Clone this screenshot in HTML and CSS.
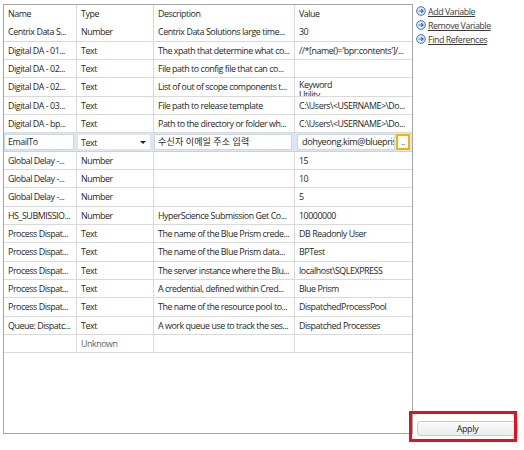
FILE: index.html
```html
<!DOCTYPE html>
<html lang="en">
<head>
  <meta charset="UTF-8" />
  <title>Environment Variables</title>
  <link rel="stylesheet" href="styles.css">
</head>
<body>

  <div class="grid">
    <div class="row head">
      <div class="cell">Name</div>
      <div class="cell">Type</div>
      <div class="cell">Description</div>
      <div class="cell">Value</div>
    </div>
    <div class="row">
      <div class="cell">Centrix Data S...</div>
      <div class="cell">Number</div>
      <div class="cell">Centrix Data Solutions large time...</div>
      <div class="cell">30</div>
    </div>
    <div class="row">
      <div class="cell">Digital DA - 01...</div>
      <div class="cell">Text</div>
      <div class="cell">The xpath that determine what co...</div>
      <div class="cell">//*[name()='bpr:contents']/...</div>
    </div>
    <div class="row">
      <div class="cell">Digital DA - 02...</div>
      <div class="cell">Text</div>
      <div class="cell">File path to config file that can co...</div>
      <div class="cell"></div>
    </div>
    <div class="row">
      <div class="cell">Digital DA - 02...</div>
      <div class="cell">Text</div>
      <div class="cell">List of out of scope components t...</div>
      <div class="cell multi">Keyword<br>Utility</div>
    </div>
    <div class="row">
      <div class="cell">Digital DA - 03...</div>
      <div class="cell">Text</div>
      <div class="cell">File path to release template</div>
      <div class="cell">C:\Users\&lt;USERNAME&gt;\Do...</div>
    </div>
    <div class="row">
      <div class="cell">Digital DA - bp...</div>
      <div class="cell">Text</div>
      <div class="cell">Path to the directory or folder wh...</div>
      <div class="cell">C:\Users\&lt;USERNAME&gt;\Do...</div>
    </div>

    <!-- row in edit mode -->
    <div class="row editing">
      <div class="cell"><div class="field">EmailTo</div></div>
      <div class="cell"><div class="field combo">Text<span class="arrow"></span></div></div>
      <div class="cell"><div class="field ko">수신자 이메일 주소 입력</div></div>
      <div class="cell value-edit">
        <div class="field">dohyeong.kim@bluepris</div>
        <div class="dots">..</div>
      </div>
    </div>

    <div class="row">
      <div class="cell">Global Delay -...</div>
      <div class="cell">Number</div>
      <div class="cell"></div>
      <div class="cell">15</div>
    </div>
    <div class="row">
      <div class="cell">Global Delay -...</div>
      <div class="cell">Number</div>
      <div class="cell"></div>
      <div class="cell">10</div>
    </div>
    <div class="row">
      <div class="cell">Global Delay -...</div>
      <div class="cell">Number</div>
      <div class="cell"></div>
      <div class="cell">5</div>
    </div>
    <div class="row">
      <div class="cell">HS_SUBMISSIO...</div>
      <div class="cell">Number</div>
      <div class="cell">HyperScience Submission Get Co...</div>
      <div class="cell">10000000</div>
    </div>
    <div class="row">
      <div class="cell">Process Dispat...</div>
      <div class="cell">Text</div>
      <div class="cell">The name of the Blue Prism crede...</div>
      <div class="cell">DB Readonly User</div>
    </div>
    <div class="row">
      <div class="cell">Process Dispat...</div>
      <div class="cell">Text</div>
      <div class="cell">The name of the Blue Prism data...</div>
      <div class="cell">BPTest</div>
    </div>
    <div class="row">
      <div class="cell">Process Dispat...</div>
      <div class="cell">Text</div>
      <div class="cell">The server instance where the Blu...</div>
      <div class="cell">localhost\SQLEXPRESS</div>
    </div>
    <div class="row">
      <div class="cell">Process Dispat...</div>
      <div class="cell">Text</div>
      <div class="cell">A credential, defined within Cred...</div>
      <div class="cell">Blue Prism</div>
    </div>
    <div class="row">
      <div class="cell">Process Dispat...</div>
      <div class="cell">Text</div>
      <div class="cell">The name of the resource pool to...</div>
      <div class="cell">DispatchedProcessPool</div>
    </div>
    <div class="row">
      <div class="cell">Queue: Dispatc...</div>
      <div class="cell">Text</div>
      <div class="cell">A work queue use to track the ses...</div>
      <div class="cell">Dispatched Processes</div>
    </div>
    <div class="row new-row">
      <div class="cell"></div>
      <div class="cell">Unknown</div>
      <div class="cell"></div>
      <div class="cell"></div>
    </div>
  </div>

  <div class="side">
    <a class="action" href="#"><svg class="go" viewBox="0 0 10 10"><circle cx="5" cy="5" r="4.3"/><path d="M2.6 5h4.4M5.3 3.2 7.1 5 5.3 6.8"/></svg>Add Variable</a>
    <a class="action" href="#"><svg class="go" viewBox="0 0 10 10"><circle cx="5" cy="5" r="4.3"/><path d="M2.6 5h4.4M5.3 3.2 7.1 5 5.3 6.8"/></svg>Remove Variable</a>
    <a class="action" href="#"><svg class="go" viewBox="0 0 10 10"><circle cx="5" cy="5" r="4.3"/><path d="M2.6 5h4.4M5.3 3.2 7.1 5 5.3 6.8"/></svg>Find References</a>
    <button class="apply-btn">Apply</button>
  </div>

  <div class="highlight"></div>

</body>
</html>
```

FILE: styles.css
```css
body {
  margin: 0;
  height: 450px;
  background: #fff;
  color: #262626;
  font-family: 'Open Sans', 'Noto Sans CJK KR', sans-serif;
  font-size: 8.9px;
  letter-spacing: -0.45px;
  display: flex;
  position: relative;
  overflow: hidden;
}
.grid {
  margin: 4px 0 0 3px;
  width: 410px;
  height: 430px;
  box-sizing: border-box;
  border: 1px solid #a5a5a5;
  overflow: hidden;
}
.row {
  display: grid;
  grid-template-columns: 73px 77px 141px 1fr;
  height: 18.33px;
  box-sizing: border-box;
  border-bottom: 1px solid #d9d9d9;
}
.row.head { border-bottom: none; }
.cell {
  padding-left: 4px;
  border-right: 1px solid #d9d9d9;
  white-space: nowrap;
  overflow: hidden;
  line-height: 18.5px;
}
.cell:last-child { border-right: none; }
.cell.multi { line-height: 10px; padding-top: 2px; }
.new-row .cell:nth-child(2) { color: #666; }

.editing {
  background: #dce6f3;
  border-bottom-color: #c3d3ea;
}
.editing .cell {
  padding: 1px 2px 1px 0;
  border-right-color: #dce6f3;
}
.editing .cell:first-child { padding-left: 0; }
.field {
  height: 16px;
  box-sizing: border-box;
  background: #fff;
  border: 1px solid #c9d7eb;
  padding-left: 3px;
  line-height: 14px;
  position: relative;
  overflow: hidden;
}
.combo { border-color: #e4e4e4; padding-top: 1px; }
.arrow {
  position: absolute;
  right: 4px;
  top: 6px;
  border-left: 3px solid transparent;
  border-right: 3px solid transparent;
  border-top: 3px solid #222;
}
.ko { font-family: 'Noto Sans CJK KR', sans-serif; font-size: 9px; letter-spacing: 0.2px; }
.value-edit {
  display: flex;
  gap: 1px;
  padding-left: 2px !important;
}
.value-edit .field {
  flex: 1;
  min-width: 0;
  font-size: 9.2px;
  letter-spacing: -0.45px;
  padding-left: 4px;
}
.dots {
  flex: none;
  width: 14px;
  height: 16px;
  box-sizing: border-box;
  border: 2px solid #f4b400;
  background: #fff;
  font-size: 8px;
  line-height: 12px;
  text-align: center;
}

.side {
  flex: 1;
  display: flex;
  flex-direction: column;
  padding: 4px 0 0 3px;
}
.action {
  display: flex;
  align-items: center;
  gap: 2px;
  height: 14px;
  color: #3a3a3a;
  text-decoration: underline;
}
.go { width: 10px; height: 10px; }
.go circle { fill: #e2ecf8; stroke: #3472b8; stroke-width: 1; }
.go path { fill: none; stroke: #3472b8; stroke-width: 1.2; }
.apply-btn {
  margin: auto 0 14px 1px;
  width: 101px;
  height: 15px;
  padding: 0;
  border: 1px solid #cacaca;
  border-radius: 3px;
  background: linear-gradient(#fbfbfb, #ececec);
  font-family: 'Open Sans', sans-serif;
  font-size: 8.9px;
  letter-spacing: -0.3px;
  color: #222;
}
.highlight {
  position: absolute;
  left: 409px;
  top: 411px;
  width: 108px;
  height: 31px;
  box-sizing: border-box;
  border: 3px solid #e3101d;
}
```
